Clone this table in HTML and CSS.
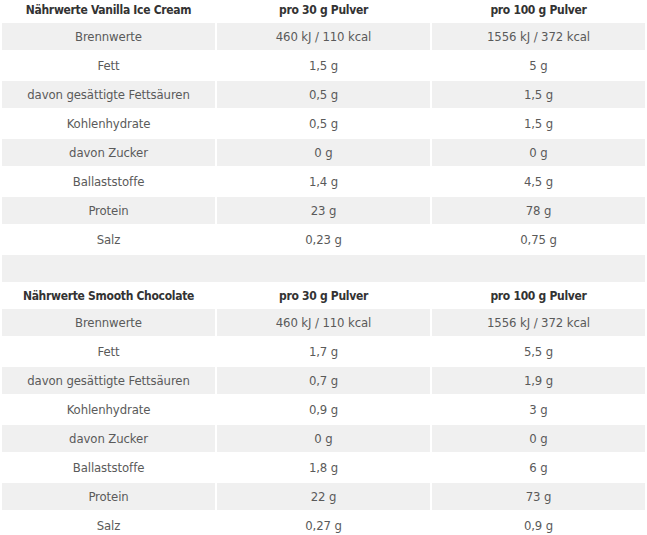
FILE: index.html
```html
<!DOCTYPE html>
<html lang="de">
<head>
<meta charset="utf-8">
<title>Nährwerte</title>
<link rel="stylesheet" href="styles.css">
</head>
<body>
<table class="nutri">
  <tbody>
    <tr class="head"><th>Nährwerte Vanilla Ice Cream</th><th>pro 30 g Pulver</th><th>pro 100 g Pulver</th></tr>
    <tr class="alt"><td>Brennwerte</td><td>460 kJ / 110 kcal</td><td>1556 kJ / 372 kcal</td></tr>
    <tr><td>Fett</td><td>1,5 g</td><td>5 g</td></tr>
    <tr class="alt"><td>davon gesättigte Fettsäuren</td><td>0,5 g</td><td>1,5 g</td></tr>
    <tr><td>Kohlenhydrate</td><td>0,5 g</td><td>1,5 g</td></tr>
    <tr class="alt"><td>davon Zucker</td><td>0 g</td><td>0 g</td></tr>
    <tr><td>Ballaststoffe</td><td>1,4 g</td><td>4,5 g</td></tr>
    <tr class="alt"><td>Protein</td><td>23 g</td><td>78 g</td></tr>
    <tr><td>Salz</td><td>0,23 g</td><td>0,75 g</td></tr>
    <tr class="alt"><td colspan="3"></td></tr>
    <tr class="head"><th>Nährwerte Smooth Chocolate</th><th>pro 30 g Pulver</th><th>pro 100 g Pulver</th></tr>
    <tr class="alt"><td>Brennwerte</td><td>460 kJ / 110 kcal</td><td>1556 kJ / 372 kcal</td></tr>
    <tr><td>Fett</td><td>1,7 g</td><td>5,5 g</td></tr>
    <tr class="alt"><td>davon gesättigte Fettsäuren</td><td>0,7 g</td><td>1,9 g</td></tr>
    <tr><td>Kohlenhydrate</td><td>0,9 g</td><td>3 g</td></tr>
    <tr class="alt"><td>davon Zucker</td><td>0 g</td><td>0 g</td></tr>
    <tr><td>Ballaststoffe</td><td>1,8 g</td><td>6 g</td></tr>
    <tr class="alt"><td>Protein</td><td>22 g</td><td>73 g</td></tr>
    <tr><td>Salz</td><td>0,27 g</td><td>0,9 g</td></tr>
  </tbody>
</table>
</body>
</html>
```

FILE: styles.css
```css
html, body {
  margin: 0;
  padding: 0;
  background: #ffffff;
}

body {
  font-family: "DejaVu Sans Condensed", "Liberation Sans", sans-serif;
  font-size: 13px;
  color: #5a5a5a;
  overflow: hidden;
}

.nutri {
  width: 647px;
  margin-top: -4px;
  border-collapse: separate;
  border-spacing: 2px;
  table-layout: fixed;
}

.nutri td,
.nutri th {
  padding: 0 4px;
  text-align: center;
  vertical-align: middle;
  white-space: nowrap;
}

.nutri td {
  height: 27px;
  font-weight: normal;
  letter-spacing: -0.1px;
}

.nutri th {
  height: 23px;
  font-size: 12px;
  font-weight: bold;
  letter-spacing: -0.3px;
  color: #333333;
}

.nutri .alt td {
  background: #f0f0f0;
}
```
